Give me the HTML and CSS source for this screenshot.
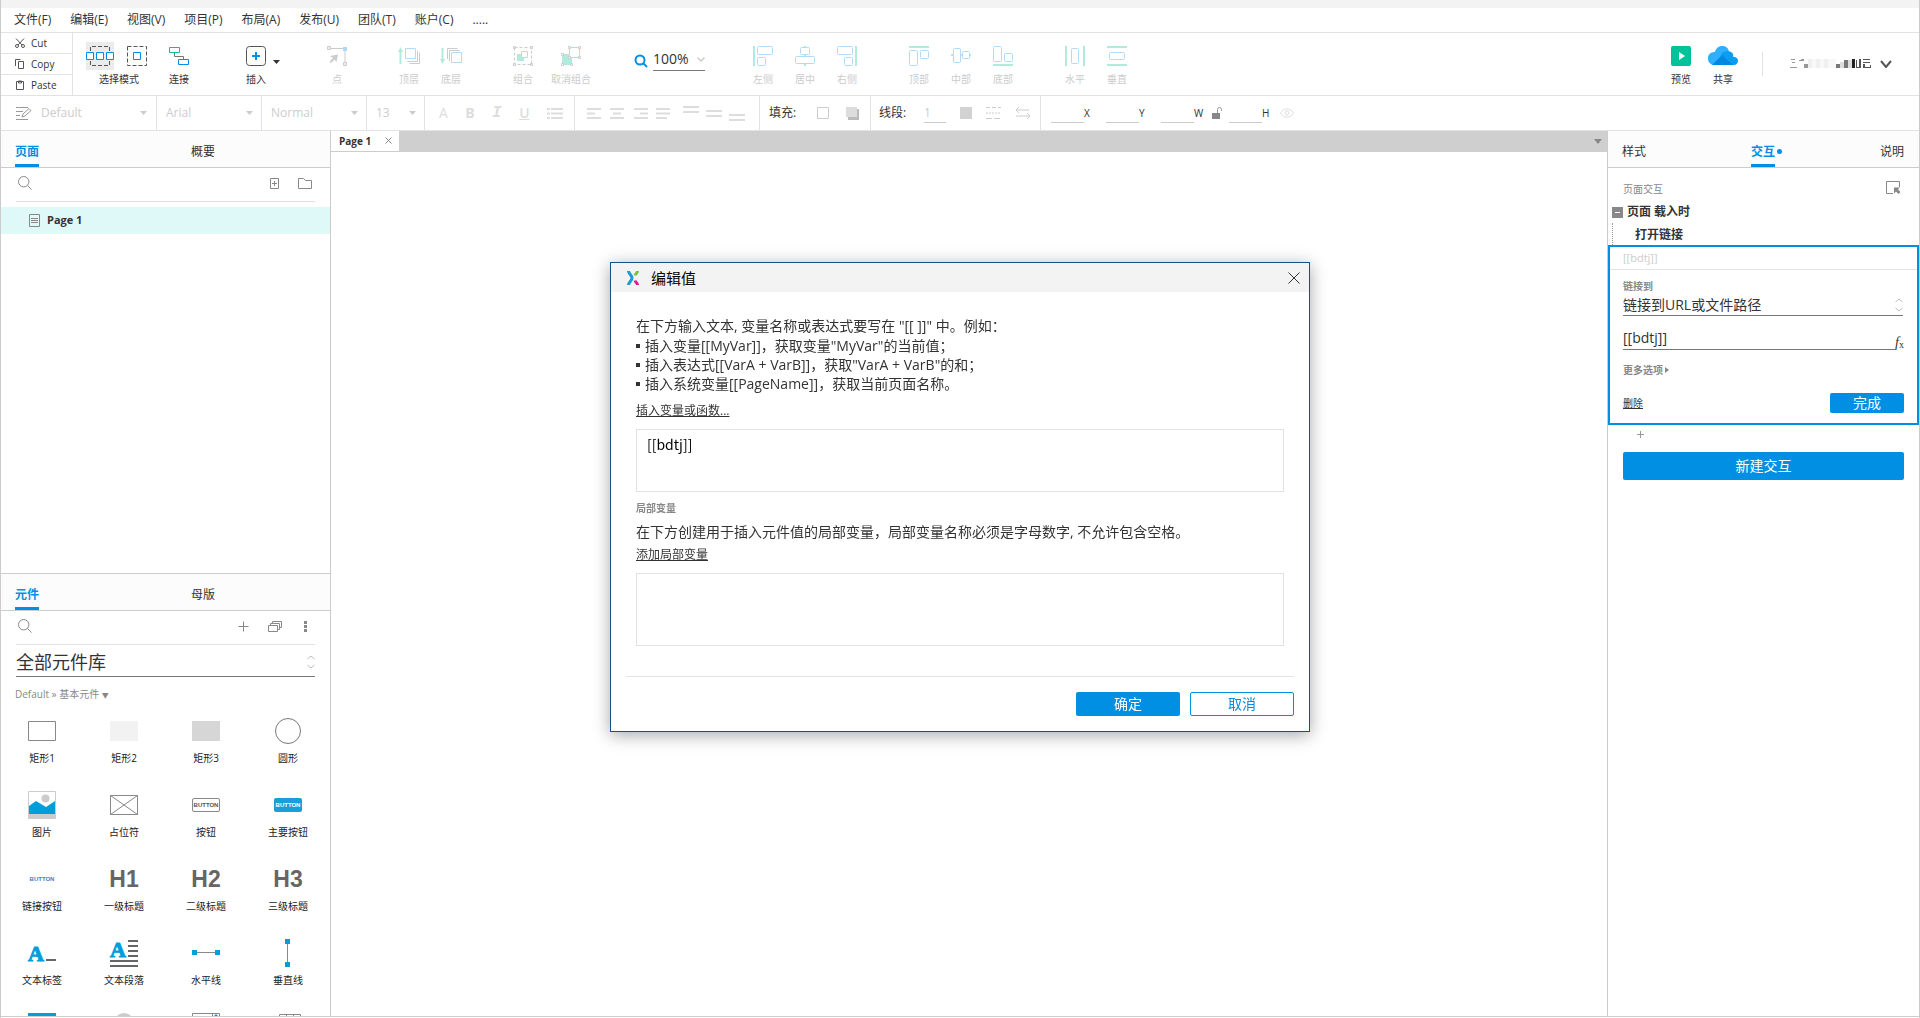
FILE: index.html
```html
<!DOCTYPE html>
<html lang="zh-CN">
<head>
  <meta charset="UTF-8" />
  <meta name="viewport" content="width=device-width, initial-scale=1" />
  <title>编辑值</title>
  <link rel="stylesheet" href="styles.css">
</head>
<body>
  <!-- shared icons -->
  <svg class="sprite" width="0" height="0" aria-hidden="true">
    <symbol id="i-search" viewBox="0 0 14 14"><circle cx="5.7" cy="5.7" r="5.2" /><path d="M9.4 9.4l4.2 4.2" /></symbol>
    <symbol id="i-caret" viewBox="0 0 7 4"><path d="M0 0h7L3.5 4z" /></symbol>
    <symbol id="i-updown" viewBox="0 0 8 14"><path d="M.5 4L4 1l3.500 3M.5 10L4 13l3.500-3" /></symbol>
  </svg>

  <div class="app">
    <div class="titlebar"></div>

    <nav class="menu">
      <a href="#">文件(F)</a>
      <a href="#">编辑(E)</a>
      <a href="#">视图(V)</a>
      <a href="#">项目(P)</a>
      <a href="#">布局(A)</a>
      <a href="#">发布(U)</a>
      <a href="#">团队(T)</a>
      <a href="#">账户(C)</a>
      <a href="#">.....</a>
    </nav>

    <div class="toolbar">
      <div class="clipboard">
        <button type="button">
          <svg width="10" height="10" viewBox="0 0 10 10" class="line"><path d="M1 .5l6 6.500M9 .5L3 7" /><circle cx="2" cy="8" r="1.500" /><circle cx="8" cy="8" r="1.500" /></svg>
          Cut
        </button>
        <button type="button">
          <svg width="10" height="10" viewBox="0 0 10 10" class="line"><path d="M.5 7V.5h5M3.500 2.500h5v7h-5z" /></svg>
          Copy
        </button>
        <button type="button">
          <svg width="10" height="10" viewBox="0 0 10 10" class="line"><path d="M1.500 1.500h7v8h-7z" /><path d="M3.500 1h3v2h-3z" /></svg>
          Paste
        </button>
      </div>

      <div class="tools">
        <button type="button" class="tool mode">
          <svg width="66" height="28" viewBox="0 0 66 28">
            <path d="M0 0h28v28H0z" fill="#ebebeb" />
            <path d="M4.500 9V4.500h19V9M4.500 19v4.500h19V19M41.500 4.500h19v19h-19z" fill="none" stroke="#555" stroke-dasharray="4 2" />
            <path d="M.5 10.500h7v7h-7zM10.500 10.500h7v7h-7zM20.500 10.500h7v7h-7zM47.500 10.500h7v7h-7z" fill="#fff" stroke="#008fe2" />
          </svg>
          <span>选择模式</span>
        </button>
        <button type="button" class="tool">
          <svg width="20" height="20" viewBox="0 0 20 20" fill="none">
            <path d="M5.500 7v3.500h9V14" stroke="#777" />
            <path d="M.5 1.500h10v5H.5z" stroke="#00c39a" /><path d="M9.500 13.500h10v5h-10z" stroke="#008fe2" />
          </svg>
          <span>连接</span>
        </button>
      </div>

      <div class="tools insert">
        <button type="button" class="tool">
          <svg width="20" height="20" viewBox="0 0 20 20" fill="none">
            <rect x=".5" y=".5" width="19" height="19" rx="3" stroke="#555" />
            <path d="M10 6v8M6 10h8" stroke="#008fe2" stroke-width="2" />
          </svg>
          <span>插入</span>
        </button>
        <svg class="insert-caret" width="7" height="4"><use href="#i-caret" /></svg>
      </div>

      <div class="tools">
        <button type="button" class="tool" disabled>
          <svg width="20" height="20" viewBox="0 0 20 20">
            <path d="M3 2.500h15v14" fill="none" stroke="#ccc" />
            <path d="M.5.500h3v3h-3zM16.500 16.500h3v3h-3z" fill="#eee" stroke="#ccc" /><path d="M16 1h4v4h-4z" fill="#a8dafa" />
            <path d="M3 10l8-1.500L9.500 16l-2-2.500L4 17l-1.500-1.500L6 12z" fill="#ccc" />
          </svg>
          <span>点</span>
        </button>
      </div>

      <div class="tools">
        <button type="button" class="tool" disabled>
          <svg width="22" height="20" viewBox="0 0 22 20" fill="none">
            <path d="M2.500 18V4" class="mint" /><path d="M0 6l2.500-5L5 6z" fill="#b0ebdc" />
            <path d="M19.500 4.500v11h-10M21.500 6.500v11h-10" stroke="#ccc" /><path d="M7.500 2.500h10v10h-10z" class="sky" />
          </svg>
          <span>顶层</span>
        </button>
        <button type="button" class="tool" disabled>
          <svg width="22" height="20" viewBox="0 0 22 20" fill="none">
            <path d="M2.500 2v14" class="mint" /><path d="M0 13l2.500 5L5 13z" fill="#b0ebdc" />
            <path d="M7.500 13V2.500h10M9.500 15V4.500h10" stroke="#ccc" /><path d="M11.500 6.500h10v10h-10z" class="sky" />
          </svg>
          <span>底层</span>
        </button>
      </div>

      <div class="tools">
        <button type="button" class="tool" disabled>
          <svg width="20" height="20" viewBox="0 0 20 20" fill="none">
            <path d="M1.500 1.500h17v17h-17z" stroke="#ccc" stroke-dasharray="3 2" />
            <path d="M.5.500h2v2h-2zM17.500.500h2v2h-2zM.5 17.500h2v2h-2zM17.500 17.500h2v2h-2z" fill="#eee" stroke="#ccc" />
            <path d="M4 8h7v7H4z" fill="#b0ebdc" /><path d="M8.500 5.500h6v6h-6z" fill="#fff" class="sky" />
          </svg>
          <span>组合</span>
        </button>
        <button type="button" class="tool wide" disabled>
          <svg width="20" height="20" viewBox="0 0 20 20">
            <path d="M1 8h10v11H1z" fill="#b0ebdc" /><path d="M8.500 1.500h10v10h-10z" fill="#fff" class="sky" />
            <path d="M7.500.500h2v2h-2zM17.500.500h2v2h-2zM17.500 10.500h2v2h-2zM7.500 10.500h2v2h-2zM.5 7.500h2v2h-2zM.5 17.500h2v2h-2zM9.500 17.500h2v2h-2z" fill="#fff" stroke="#ccc" />
          </svg>
          <span>取消组合</span>
        </button>
      </div>

      <div class="zoom">
        <svg width="14" height="14" viewBox="0 0 14 14" fill="none" stroke="#008fe2" stroke-width="2"><circle cx="6" cy="6" r="4.500" /><path d="M9.500 9.500l3.500 3.500" /></svg>
        <label><input type="text" value="100%" aria-label="缩放"><svg width="8" height="5" viewBox="0 0 8 5" fill="none" stroke="#ccc" stroke-width="1.500"><path d="M.5.500L4 4 7.500.5" /></svg></label>
      </div>

      <div class="tools">
        <button type="button" class="tool" disabled>
          <svg width="20" height="20" viewBox="0 0 20 20" fill="none"><path d="M1 0v20" class="mint" /><rect x="4.500" y=".5" width="15" height="8" rx="1" class="sky" /><rect x="4.500" y="11.500" width="8" height="8" rx="1" class="sky" /></svg>
          <span>左侧</span>
        </button>
        <button type="button" class="tool" disabled>
          <svg width="20" height="20" viewBox="0 0 20 20" fill="none"><path d="M10 0v20" class="mint" /><rect x="5.500" y="1.500" width="9" height="7" rx="1" fill="#fff" class="sky" /><rect x=".5" y="10.500" width="19" height="7" rx="1" fill="#fff" class="sky" /></svg>
          <span>居中</span>
        </button>
        <button type="button" class="tool" disabled>
          <svg width="20" height="20" viewBox="0 0 20 20" fill="none"><path d="M19 0v20" class="mint" /><rect x=".5" y=".5" width="15" height="8" rx="1" class="sky" /><rect x="7.500" y="11.500" width="8" height="8" rx="1" class="sky" /></svg>
          <span>右侧</span>
        </button>
      </div>

      <div class="tools">
        <button type="button" class="tool" disabled>
          <svg width="20" height="20" viewBox="0 0 20 20" fill="none"><path d="M0 1h20" class="mint" /><rect x=".5" y="4.500" width="8" height="15" rx="1" class="sky" /><rect x="11.500" y="4.500" width="8" height="8" rx="1" class="sky" /></svg>
          <span>顶部</span>
        </button>
        <button type="button" class="tool" disabled>
          <svg width="20" height="20" viewBox="0 0 20 20" fill="none"><path d="M0 9h20" class="mint" /><rect x="2.500" y="2.500" width="7" height="14" rx="1" fill="#fff" class="sky" /><rect x="11.500" y="5.500" width="7" height="7" rx="1" fill="#fff" class="sky" /></svg>
          <span>中部</span>
        </button>
        <button type="button" class="tool" disabled>
          <svg width="20" height="20" viewBox="0 0 20 20" fill="none"><path d="M0 19h20" class="mint" /><rect x=".5" y=".5" width="8" height="15" rx="1" class="sky" /><rect x="11.500" y="7.500" width="8" height="8" rx="1" class="sky" /></svg>
          <span>底部</span>
        </button>
      </div>

      <div class="tools">
        <button type="button" class="tool" disabled>
          <svg width="20" height="20" viewBox="0 0 20 20" fill="none"><path d="M1 0v20M19 0v20" class="mint" /><rect x="6.500" y="2.500" width="7" height="15" rx="1" class="sky" /></svg>
          <span>水平</span>
        </button>
        <button type="button" class="tool" disabled>
          <svg width="20" height="20" viewBox="0 0 20 20" fill="none"><path d="M0 1h20M0 19h20" class="mint" /><rect x="2.500" y="6.500" width="15" height="7" rx="1" class="sky" /></svg>
          <span>垂直</span>
        </button>
      </div>

      <div class="account">
        <button type="button" class="tool">
          <svg width="20" height="20" viewBox="0 0 20 20"><rect width="20" height="20" rx="2" fill="#00c39a" /><path d="M8 6l6 4-6 4z" fill="#fff" /></svg>
          <span>预览</span>
        </button>
        <button type="button" class="tool">
          <svg width="30" height="20" viewBox="0 0 30 20">
            <path d="M6 19a6 6 0 0 1-6-6.500C0 8 3 6 7 6c1-4 4-6 7-6 4 0 6 2 7 5z" fill="#2fb0ff" />
            <path d="M13 9c1-4 9-6 12-1 0 1 .5 2 .3 3C29 11 30 13 30 15c0 2-2 4-4 4H13z" fill="#0c9df0" />
            <path d="M4 19l10-10 11 10z" fill="#0089e0" />
          </svg>
          <span>共享</span>
        </button>
        <button type="button" class="user" aria-label="账户">
          <svg width="84" height="12" viewBox="0 0 84 12">
            <path d="M2 1h4v1H2zM3 4h3v1H3zM1 9h7v1H1zM10 2h2v1h-2zM12 1h3v2h-3z" fill="#999" />
            <path d="M15 6h4v4h-4z" fill="#999" /><path d="M19 1h4v9h-4zM27 1h4v9h-4zM35 1h4v9h-4z" fill="#f0f0f0" />
            <path d="M23 1h4v9h-4zM31 1h4v9h-4zM39 1h8v9h-8z" fill="#f8f8f8" />
            <path d="M47 6h4v4h-4zM55 2h4v8h-4z" fill="#777" /><path d="M51 4h4v6h-4zM59 2h4v8h-4z" fill="#ddd" />
            <path d="M63 1h3v9h-3z" fill="#222" /><path d="M67 2h1v8h-1zM70 1h2v9h-4v-1h2zM74 1h7v1h-7zM74 4h7v1h-7zM74 6h2v3h5v-2h1v3h-8z" fill="#555" />
          </svg>
          <svg width="12" height="8" viewBox="0 0 12 8" fill="none" stroke="#555" stroke-width="2"><path d="M1 1l5 6 5-6" /></svg>
        </button>
      </div>
    </div>

    <div class="stylebar">
      <div class="cell w-style">
        <svg width="16" height="13" viewBox="0 0 16 13" fill="none" stroke="#999"><path d="M0 .5h12M0 4.500h7M0 8.500h4M0 12.500h12M6 10l1-3 6-5.500 2 2L9 9z" /></svg>
        <select disabled aria-label="样式"><option>Default</option></select>
        <svg width="7" height="4"><use href="#i-caret" /></svg>
      </div>
      <div class="cell w-font">
        <select disabled aria-label="字体"><option>Arial</option></select>
        <svg width="7" height="4"><use href="#i-caret" /></svg>
      </div>
      <div class="cell w-font">
        <select disabled aria-label="字重"><option>Normal</option></select>
        <svg width="7" height="4"><use href="#i-caret" /></svg>
      </div>
      <div class="cell w-size">
        <select disabled aria-label="字号"><option>13</option></select>
        <svg width="7" height="4"><use href="#i-caret" /></svg>
      </div>
      <div class="cell w-format">
        <button type="button" disabled>A</button>
        <button type="button" disabled><b>B</b></button>
        <button type="button" disabled class="slab"><i>I</i></button>
        <button type="button" disabled class="under"><u>U</u></button>
        <button type="button" disabled aria-label="列表"><svg width="16" height="11" viewBox="0 0 16 11" stroke="#ddd" stroke-width="2"><path d="M0 1h3M4 1h12M0 5.500h3M4 5.500h12M0 10h3M4 10h12" /></svg></button>
      </div>
      <div class="cell w-align">
        <svg width="158" height="18" viewBox="0 0 158 18" stroke="#ddd" stroke-width="2">
          <path d="M0 5h14M0 9.500h8M0 14h14M23 5h14M26 9.500h8M23 14h14M47 5h14M53 9.500h8M47 14h14M69 5h14M69 9.500h14M69 14h11" />
          <path d="M96 3h16M96 8h16M119 7h16M119 12h16M142 11h16M142 16h16" />
        </svg>
      </div>
      <div class="cell w-fill">
        <span class="strong">填充:</span>
        <svg width="12" height="12" viewBox="0 0 12 12"><path d="M.5.500h11v11H.5z" fill="none" stroke="#ccc" /></svg>
        <svg width="13" height="13" viewBox="0 0 13 13"><path d="M2 2h11v11H2z" fill="#bbb" /><path d="M0 0h11v10H0z" fill="#ddd" /></svg>
      </div>
      <div class="cell w-line">
        <span class="strong">线段:</span>
        <input type="text" value="1" disabled aria-label="线宽">
        <svg width="12" height="12" viewBox="0 0 12 12"><path d="M0 0h12v12H0z" fill="#d2d2d2" /></svg>
        <svg width="15" height="12" viewBox="0 0 15 12" stroke="#ccc"><path d="M0 .5h15" stroke-dasharray="4 2" /><path d="M0 6h15" stroke-dasharray="2 1" /><path d="M0 11.500h15" stroke-dasharray="6 2" /></svg>
        <svg width="16" height="12" viewBox="0 0 16 12" fill="none" stroke="#ccc"><path d="M14 3H1M4 0L1 3l3 3M1 9h14M12 6l3 3-3 3" /></svg>
      </div>
      <div class="cell w-pos">
        <label class="pos"><input type="text">X</label>
        <label class="pos"><input type="text">Y</label>
        <label class="pos"><input type="text">W</label>
        <svg class="lock" width="10" height="12" viewBox="0 0 10 12"><path d="M0 6h8v6H0z" fill="#888" /><path d="M5.500 6V2.500a2 2 0 0 1 4 0V4" fill="none" stroke="#999" /></svg>
        <label class="pos"><input type="text">H</label>
        <svg class="eye" width="14" height="10" viewBox="0 0 14 10" fill="none" stroke="#ddd"><path d="M.5 5C4-.5 10-.5 13.500 5 10 10.500 4 10.500.5 5z" /><circle cx="7" cy="5" r="2" /></svg>
      </div>
    </div>

    <div class="main">
      <aside class="left">
        <section class="pane">
          <div class="tabs">
            <a href="#" class="tab active">页面</a>
            <a href="#" class="tab second">概要</a>
          </div>
          <div class="search">
            <svg width="14" height="14"><use href="#i-search" /></svg>
            <span class="grow"></span>
            <svg class="line" width="9" height="11" viewBox="0 0 9 11"><path d="M.5.500h8v10h-8zM4.500 3v5M2 5.500h5" /></svg>
            <svg class="line" width="14" height="11" viewBox="0 0 14 11"><path d="M.5.500h5l2 2h6v8H.5z" /></svg>
          </div>
          <div class="page-row">
            <svg class="line" width="11" height="13" viewBox="0 0 11 13"><path d="M.5.500h10v12H.5zM2 4.500h7M2 6.500h7M2 8.500h7" /></svg>
            Page 1
          </div>
        </section>

        <section class="pane">
          <div class="tabs">
            <a href="#" class="tab active">元件</a>
            <a href="#" class="tab second">母版</a>
          </div>
          <div class="search lib-search">
            <svg width="14" height="14"><use href="#i-search" /></svg>
            <span class="grow"></span>
            <svg class="line" width="11" height="11" viewBox="0 0 11 11"><path d="M5.500.500v10M.5 5.500h10" /></svg>
            <svg class="line stack" width="15" height="11" viewBox="0 0 15 11"><path d="M.5 4.500h9v6h-9zM2.500 4V2.500h9v6H10M4.500 2V.500h9v6H12" /></svg>
            <svg width="3" height="11" viewBox="0 0 3 11"><path d="M0 0h3v3H0zM0 4h3v3H0zM0 8h3v3H0z" fill="#888" /></svg>
          </div>
          <label class="library">
            <select aria-label="元件库"><option>全部元件库</option></select>
            <svg class="updown" width="8" height="14"><use href="#i-updown" /></svg>
          </label>
          <div class="crumb">Default » 基本元件 <span>▼</span></div>
          <div class="widgets">
            <figure><svg width="28" height="28" viewBox="0 0 28 28"><path d="M.5 4.500h27v19H.5z" fill="#fff" stroke="#888" /></svg><figcaption>矩形1</figcaption></figure>
            <figure><svg width="28" height="28" viewBox="0 0 28 28"><path d="M0 4h28v20H0z" fill="#f2f2f2" /></svg><figcaption>矩形2</figcaption></figure>
            <figure><svg width="28" height="28" viewBox="0 0 28 28"><path d="M0 4h28v20H0z" fill="#d6d6d6" /></svg><figcaption>矩形3</figcaption></figure>
            <figure><svg width="28" height="28" viewBox="0 0 28 28"><circle cx="14" cy="14" r="12.500" fill="#fff" stroke="#777" /></svg><figcaption>圆形</figcaption></figure>

            <figure><svg width="28" height="28" viewBox="0 0 28 28"><path d="M.5.500h27v27H.5z" fill="#fff" stroke="#ccc" /><path d="M1 23h26v4H1z" fill="#ccc" /><circle cx="17.500" cy="7.500" r="4" fill="#ccc" /><path d="M1 15l7-5 10 6 9-6v13H1z" fill="#009ddc" /></svg><figcaption>图片</figcaption></figure>
            <figure><svg width="28" height="28" viewBox="0 0 28 28"><path d="M.5 4.500h27v19H.5zM.5 4.500l27 19M.5 23.500l27-19" fill="none" stroke="#888" /></svg><figcaption>占位符</figcaption></figure>
            <figure><span class="chip outline">BUTTON</span><figcaption>按钮</figcaption></figure>
            <figure><span class="chip primary">BUTTON</span><figcaption>主要按钮</figcaption></figure>

            <figure><span class="chip link">BUTTON</span><figcaption>链接按钮</figcaption></figure>
            <figure><span class="heading">H1</span><figcaption>一级标题</figcaption></figure>
            <figure><span class="heading">H2</span><figcaption>二级标题</figcaption></figure>
            <figure><span class="heading">H3</span><figcaption>三级标题</figcaption></figure>

            <figure><svg width="28" height="28" viewBox="0 0 28 28"><text x="0" y="22" class="serif-a">A</text><path d="M18 21h10" stroke="#666" stroke-width="2" /></svg><figcaption>文本标签</figcaption></figure>
            <figure><svg width="28" height="28" viewBox="0 0 28 28"><text x="0" y="18" class="serif-a">A</text><path d="M18 2h10M18 7h10M18 12h10M18 17h10M0 22h28M0 27h28" stroke="#666" stroke-width="2" /></svg><figcaption>文本段落</figcaption></figure>
            <figure><svg width="28" height="28" viewBox="0 0 28 28"><path d="M0 13.500h28" stroke="#888" /><path d="M0 11h5v5H0zM23 11h5v5h-5z" fill="#009ddc" /></svg><figcaption>水平线</figcaption></figure>
            <figure><svg width="28" height="28" viewBox="0 0 28 28"><path d="M13.500 0v28" stroke="#888" /><path d="M11 0h5v5h-5zM11 23h5v5h-5z" fill="#009ddc" /></svg><figcaption>垂直线</figcaption></figure>

            <figure><svg width="28" height="28" viewBox="0 0 28 28"><path d="M0 0h28v28H0z" fill="#009ddc" /></svg></figure>
            <figure><svg width="28" height="28" viewBox="0 0 28 28"><circle cx="14" cy="10" r="10" fill="#ccc" /></svg></figure>
            <figure><svg width="28" height="28" viewBox="0 0 28 28"><path d="M.5.500h27v27H.5zM20.500 0v20" fill="none" stroke="#888" /><path d="M22 3h4l-2-2z" fill="#009ddc" /></svg></figure>
            <figure><svg width="28" height="28" viewBox="0 0 28 28"><path d="M5.500 1.500h21v21h-21zM12.500 1v20M19.500 1v20" fill="none" stroke="#888" /></svg></figure>
          </div>
        </section>
      </aside>

      <main class="canvas">
        <div class="doc-tabs">
          <div class="doc-tab">Page 1
            <button type="button" aria-label="关闭页面"><svg width="7" height="7" viewBox="0 0 7 7" stroke="#888"><path d="M.5.500l6 6M6.500.500l-6 6" /></svg></button>
          </div>
          <svg class="doc-caret" width="8" height="5" viewBox="0 0 8 5"><path d="M0 0h8L4 5z" /></svg>
        </div>
      </main>

      <aside class="right">
        <div class="tabs spread">
          <a href="#" class="tab">样式</a>
          <a href="#" class="tab active dot">交互</a>
          <a href="#" class="tab">说明</a>
        </div>
        <div class="ix-head">
          <span>页面交互</span>
          <svg width="15" height="14" viewBox="0 0 15 14"><path d="M7 12.500H.5V.500h13V6" fill="none" stroke="#888" /><path d="M8 6.500h6l-2 2 2.500 2.500-2 2-2.500-2.500-2 2z" fill="#888" /></svg>
        </div>
        <div class="event">
          <svg width="11" height="11" viewBox="0 0 11 11"><path d="M0 0h11v11H0z" fill="#888" /><path d="M3 5.500h5" stroke="#fff" /></svg>
          页面 载入时
        </div>
        <div class="action">打开链接</div>
        <form class="editor">
          <div class="target">[[bdtj]]</div>
          <div class="editor-body">
            <label class="caption" for="linkTo">链接到</label>
            <div class="field">
              <select id="linkTo"><option>链接到URL或文件路径</option></select>
              <svg class="updown" width="8" height="14"><use href="#i-updown" /></svg>
            </div>
            <div class="fx-row">
              <input type="text" value="[[bdtj]]" aria-label="URL">
              <button type="button" class="fx"><i>f</i><sub>x</sub></button>
            </div>
            <a href="#" class="more">更多选项<svg width="4" height="6" viewBox="0 0 4 6"><path d="M0 0l4 3-4 3z" fill="#888" /></svg></a>
            <div class="editor-foot">
              <a href="#">删除</a>
              <button type="button" class="btn small">完成</button>
            </div>
          </div>
        </form>
        <button type="button" class="add" aria-label="添加动作"><svg width="7" height="7" viewBox="0 0 7 7" stroke="#999"><path d="M3.500 0v7M0 3.500h7" /></svg></button>
        <button type="button" class="btn new">新建交互</button>
      </aside>
    </div>
    <div class="statusbar"></div>
  </div>

  <div class="overlay">
    <div class="dialog" role="dialog" aria-labelledby="dialogTitle">
      <header>
        <svg width="12" height="14" viewBox="0 0 12 14" fill="none" stroke-width="3"><path d="M1.500 0c0 3 3.500 4 3.500 7s-3.500 4-3.500 7" stroke="#1a9bd7" /><path d="M10.500 0c0 2-2 2.500-2.500 4.500" stroke="#7ac143" /><path d="M8 9.500c.5 2 2.500 2.500 2.500 4.500" stroke="#e5178f" /></svg>
        <h1 id="dialogTitle">编辑值</h1>
        <button type="button" aria-label="关闭"><svg width="12" height="12" viewBox="0 0 12 12" stroke="#333"><path d="M.5.500l11 11M11.500.500l-11 11" /></svg></button>
      </header>
      <div class="dialog-body">
        <p>在下方输入文本, 变量名称或表达式要写在 "[[ ]]" 中。例如：</p>
        <ul>
          <li>插入变量[[MyVar]]，获取变量"MyVar"的当前值；</li>
          <li>插入表达式[[VarA + VarB]]，获取"VarA + VarB"的和；</li>
          <li>插入系统变量[[PageName]]，获取当前页面名称。</li>
        </ul>
        <a href="#" class="insert-link">插入变量或函数...</a>
        <textarea aria-label="值">[[bdtj]]</textarea>
        <h2>局部变量</h2>
        <p>在下方创建用于插入元件值的局部变量，局部变量名称必须是字母数字, 不允许包含空格。</p>
        <a href="#" class="add-link">添加局部变量</a>
        <div class="locals"></div>
      </div>
      <footer>
        <button type="button" class="btn">确定</button>
        <button type="button" class="btn ghost">取消</button>
      </footer>
    </div>
  </div>
</body>
</html>
```
FILE: styles.css
```css
* {
  box-sizing: border-box;
}
body {
  margin: 0;
  font-family: "Open Sans", "Noto Sans CJK SC", sans-serif;
  font-size: 12px;
  line-height: 16px;
  color: #333;
  background: #fff;
}
button, input, select, textarea {
  font: inherit;
  color: inherit;
  margin: 0;
  padding: 0;
  border: 0;
  border-radius: 0;
  background: none;
  outline: none;
}
select {
  appearance: none;
  opacity: 1;
}
input {
  min-width: 0;
}
a {
  color: inherit;
}
svg {
  display: block;
  flex: none;
}
.sprite {
  position: absolute;
}
.line {
  fill: none;
  stroke: #888;
}
.sky {
  stroke: #b0dcf8;
}
.mint {
  stroke: #b0ebdc;
  stroke-width: 2;
}
.grow {
  flex: 1;
}
.app {
  display: flex;
  flex-direction: column;
  height: 100vh;
  border-left: 1px solid #ccc;
  border-right: 1px solid #ccc;
}

/* menu */
.titlebar {
  flex: none;
  height: 8px;
  background: #f3f3f3;
}
.menu {
  display: flex;
  flex: none;
  gap: 19px;
  height: 25px;
  padding: 4px 13px;
  border-bottom: 1px solid #e2e2e2;
}
.menu a {
  text-decoration: none;
}

/* toolbar */
.toolbar {
  display: flex;
  flex: none;
  gap: 30px;
  height: 63px;
  border-bottom: 1px solid #e2e2e2;
}
.clipboard {
  display: flex;
  flex-direction: column;
  width: 72px;
  margin-right: -17px;
  border-right: 1px solid #e2e2e2;
}
.clipboard button {
  display: flex;
  flex: 1;
  align-items: center;
  gap: 6px;
  padding-left: 14px;
  font-size: 10px;
  line-height: 14px;
}
.clipboard button + button {
  border-top: 1px solid #e2e2e2;
}
.clipboard .line {
  stroke: #555;
}
.tools {
  display: flex;
}
.tool {
  display: flex;
  flex-direction: column;
  align-items: center;
  gap: 7px;
  width: 42px;
  padding-top: 13px;
  font-size: 10px;
  line-height: 12px;
  white-space: nowrap;
}
.tool:disabled {
  color: #ccc;
}
.tool.wide {
  width: 54px;
}
.tool.mode {
  width: 66px;
  margin-right: 6px;
  padding-top: 9px;
  gap: 3px;
}
.insert {
  width: 51px;
  margin-left: 5px;
}
.insert-caret {
  margin: 27px 0 0 -4px;
  fill: #333;
}
.zoom {
  display: flex;
  gap: 5px;
  width: 84px;
  padding-left: 6px;
}
.zoom > svg {
  margin-top: 21px;
}
.zoom label {
  display: flex;
  align-items: center;
  width: 52px;
  height: 23px;
  margin-top: 15px;
  border-bottom: 1px solid #777;
  font-size: 14px;
}
.zoom input {
  width: 44px;
}
.account {
  display: flex;
  align-items: flex-start;
  margin-left: auto;
  padding-right: 27px;
}
.user {
  display: flex;
  align-items: center;
  gap: 7px;
  height: 24px;
  margin: 19px 0 0 18px;
  padding-left: 26px;
  border-left: 1px solid #e2e2e2;
}

/* style bar */
.stylebar {
  display: flex;
  flex: none;
  height: 35px;
  border-bottom: 1px solid #e2e2e2;
}
.cell {
  display: flex;
  align-items: center;
  border-right: 1px solid #e2e2e2;
}
.cell select {
  flex: 1;
  min-width: 0;
  color: #ccc;
}
.cell select + svg {
  fill: #ccc;
}
.w-style {
  width: 156px;
  gap: 9px;
  padding: 0 9px 0 15px;
}
.w-font {
  width: 105px;
  padding: 0 8px 0 9px;
}
.w-size {
  width: 58px;
  padding: 0 8px 0 9px;
}
.w-format {
  justify-content: space-between;
  width: 150px;
  padding: 0 11px 0 14px;
  font-size: 14px;
}
.w-format button {
  color: #ddd;
}
.w-format .slab {
  font-family: "Liberation Mono", monospace;
  font-size: 16px;
  font-weight: bold;
}
.w-format .under {
  font-weight: 600;
}
.w-align {
  width: 185px;
  padding-left: 12px;
}
.w-fill {
  width: 111px;
  gap: 17px;
  padding-left: 9px;
}
.w-line {
  width: 170px;
  gap: 14px;
  padding-left: 8px;
}
.w-line input {
  width: 22px;
  height: 20px;
  border-bottom: 1px solid #ccc;
  color: #ccc;
}
.strong {
  width: 31px;
  white-space: nowrap;
}
.w-pos {
  gap: 12px;
  padding-left: 10px;
  border: 0;
}
.pos {
  display: flex;
  align-items: center;
  width: 43px;
  font-size: 10px;
}
.pos input {
  flex: none;
  width: 33px;
  height: 20px;
  border-bottom: 1px solid #ccc;
}
.lock {
  margin: 0 -5px 0 -4px;
}
.eye {
  margin-left: -4px;
}

/* panels */
.main {
  display: flex;
  flex: 1;
  min-height: 0;
}
.left {
  display: flex;
  flex-direction: column;
  flex: none;
  width: 330px;
  border-right: 1px solid #ccc;
}
.pane {
  flex: 1 1 0;
  min-height: 0;
  overflow: hidden;
}
.pane + .pane {
  border-top: 1px solid #ccc;
}
.tabs {
  display: flex;
  height: 37px;
  padding: 0 14px;
  background: #fcfcfc;
  border-bottom: 1px solid #ccc;
}
.tab {
  padding-top: 13px;
  height: 36px;
  text-decoration: none;
}
.tab.active {
  color: #008fe2;
  font-weight: bold;
  border-bottom: 3px solid #008fe2;
}
.tab.second {
  margin-left: 152px;
}
.tabs.spread {
  justify-content: space-between;
  padding-right: 15px;
}
.dot {
  position: relative;
}
.dot::after {
  content: "";
  position: absolute;
  left: 26px;
  top: 18px;
  width: 5px;
  height: 5px;
  border-radius: 50%;
  background: #008fe2;
}
.search {
  display: flex;
  align-items: center;
  gap: 19px;
  height: 34px;
  margin: 0 15px;
  padding: 0 3px 3px 2px;
  border-bottom: 1px solid #e2e2e2;
}
.search.lib-search {
  padding-right: 8px;
}
.search use {
  fill: none;
  stroke: #888;
}
.search .stack {
  margin-right: 2px;
}
.page-row {
  display: flex;
  align-items: center;
  gap: 7px;
  height: 27px;
  margin-top: 5px;
  padding: 0 0 1px 28px;
  background: #dff9f9;
  font-size: 11px;
  font-weight: bold;
}
.library {
  display: flex;
  align-items: center;
  height: 32px;
  margin: 0 15px;
  padding-top: 2px;
  border-bottom: 1px solid #777;
}
.library select {
  flex: 1;
  font-size: 18px;
  line-height: 24px;
}
.updown {
  fill: none;
  stroke: #bbb;
}
.crumb {
  height: 40px;
  padding: 9px 14px;
  font-size: 10px;
  color: #888;
}
.crumb span {
  font-size: 7px;
}
.widgets {
  display: grid;
  grid-template-columns: repeat(4, 82px);
  grid-auto-rows: 74px;
}
figure {
  display: flex;
  flex-direction: column;
  align-items: center;
  gap: 7px;
  margin: 0;
  font-size: 10px;
  line-height: 12px;
  color: #222;
}
figure svg {
  overflow: visible;
}
.chip {
  display: flex;
  align-items: center;
  justify-content: center;
  width: 28px;
  height: 14px;
  margin: 7px 0;
  border-radius: 2px;
  font: bold 6px "Liberation Sans", sans-serif;
}
.outline {
  border: 1px solid #888;
  color: #555;
}
.primary {
  background: #199ed8;
  color: #fff;
}
.link {
  color: #3e83c6;
}
.heading {
  height: 28px;
  font: bold 23px/28px "Liberation Sans", sans-serif;
  color: #666;
}
.serif-a {
  font: bold 22px "Liberation Serif", serif;
  fill: #009ddc;
  stroke: #009ddc;
}

/* canvas */
.canvas {
  flex: 1;
  min-width: 0;
}
.doc-tabs {
  display: flex;
  align-items: center;
  justify-content: space-between;
  height: 21px;
  padding-right: 5px;
  background: #cfcfcf;
}
.doc-tab {
  display: flex;
  align-items: center;
  gap: 14px;
  height: 21px;
  padding: 0 7px 1px 8px;
  background: #fff;
  border-bottom: 1px solid #ccc;
  font-size: 10px;
  font-weight: bold;
}
.doc-caret {
  fill: #888;
}

/* interactions */
.right {
  display: flex;
  flex-direction: column;
  flex: none;
  width: 312px;
  border-left: 1px solid #ccc;
}
.ix-head {
  display: flex;
  align-items: flex-start;
  justify-content: space-between;
  padding: 13px 18px 0 15px;
  font-size: 10px;
  color: #888;
}
.event {
  display: flex;
  align-items: center;
  gap: 4px;
  height: 22px;
  margin-top: 4px;
  padding-left: 4px;
  font-weight: bold;
}
.action {
  height: 22px;
  margin-left: 4px;
  padding: 4px 22px;
  border-left: 1px dotted #999;
  font-weight: bold;
}
.editor {
  border: 2px solid #008fe2;
}
.target {
  height: 23px;
  padding: 3px 13px;
  border-bottom: 1px solid #e2e2e2;
  font-size: 11px;
  color: #ccc;
}
.editor-body {
  display: flex;
  flex-direction: column;
  height: 153px;
  padding: 8px 13px 10px;
}
.caption {
  font-size: 10px;
  font-weight: bold;
  color: #888;
}
.field {
  display: flex;
  align-items: center;
  height: 22px;
  margin-right: 1px;
  border-bottom: 1px solid #777;
}
.field select {
  flex: 1;
  font-size: 14px;
  line-height: 20px;
}
.fx-row {
  display: flex;
  align-items: flex-end;
  margin-top: 10px;
}
.fx-row input {
  flex: 1;
  height: 24px;
  border-bottom: 1px solid #777;
  font-size: 14px;
}
.fx {
  height: 14px;
  font-family: "Liberation Serif", serif;
  font-size: 14px;
  line-height: 14px;
}
.fx sub {
  font-size: 10px;
  line-height: 0;
  vertical-align: -1px;
}
.more {
  display: flex;
  align-items: center;
  gap: 2px;
  margin-top: 12px;
  font-size: 10px;
  font-weight: bold;
  color: #888;
  text-decoration: none;
}
.editor-foot {
  display: flex;
  align-items: center;
  justify-content: space-between;
  margin-top: auto;
  font-size: 10px;
}
.btn {
  height: 24px;
  width: 104px;
  border-radius: 2px;
  background: #008fe2;
  color: #fff;
  font-size: 14px;
}
.btn.small {
  width: 74px;
  height: 20px;
}
.btn.ghost {
  border: 1px solid #008fe2;
  background: #fff;
  color: #008fe2;
}
.add {
  align-self: flex-start;
  height: 27px;
  padding: 0 29px 8px;
}
.btn.new {
  width: auto;
  height: 28px;
  margin: 0 15px;
}
.statusbar {
  flex: none;
  height: 2px;
  border-top: 1px solid #ccc;
}

/* edit value dialog */
.overlay {
  position: fixed;
  inset: 0;
  display: flex;
  align-items: center;
  justify-content: center;
  padding-bottom: 24px;
}
.dialog {
  width: 700px;
  border: 1px solid #14508a;
  background: #fff;
  box-shadow: 0 3px 16px rgba(0, 0, 0, 0.35);
}
.dialog header {
  display: flex;
  align-items: center;
  gap: 12px;
  height: 29px;
  padding: 0 9px 0 16px;
  background: #f3f3f3;
}
.dialog h1 {
  flex: 1;
  margin: 0;
  font-size: 15px;
  font-weight: normal;
  color: #000;
}
.dialog-body {
  padding: 24px 25px 30px;
}
.dialog p,
.dialog ul {
  margin: 0;
  padding: 0;
  font-size: 14px;
  line-height: 20px;
  list-style: none;
}
.dialog li {
  display: flex;
  align-items: center;
  gap: 5px;
  height: 19px;
}
.dialog li::before {
  content: "";
  width: 4px;
  height: 4px;
  background: #333;
}
.dialog-body a {
  display: block;
  line-height: 20px;
}
.insert-link {
  margin: 8px 0;
}
.add-link {
  margin: 3px 0 8px;
}
.dialog textarea {
  display: block;
  width: 100%;
  height: 63px;
  padding: 4px 10px;
  border: 1px solid #e2e2e2;
  font-family: "Noto Sans CJK SC", sans-serif;
  font-size: 14px;
  line-height: 20px;
  color: #000;
  resize: none;
}
.dialog h2 {
  margin: 8px 0 6px;
  font-size: 10px;
  line-height: 16px;
  color: #888;
}
.locals {
  height: 73px;
  border: 1px solid #e2e2e2;
}
.dialog footer {
  display: flex;
  justify-content: flex-end;
  gap: 10px;
  margin: 0 15px;
  padding: 15px 0;
  border-top: 1px solid #e2e2e2;
}
```
